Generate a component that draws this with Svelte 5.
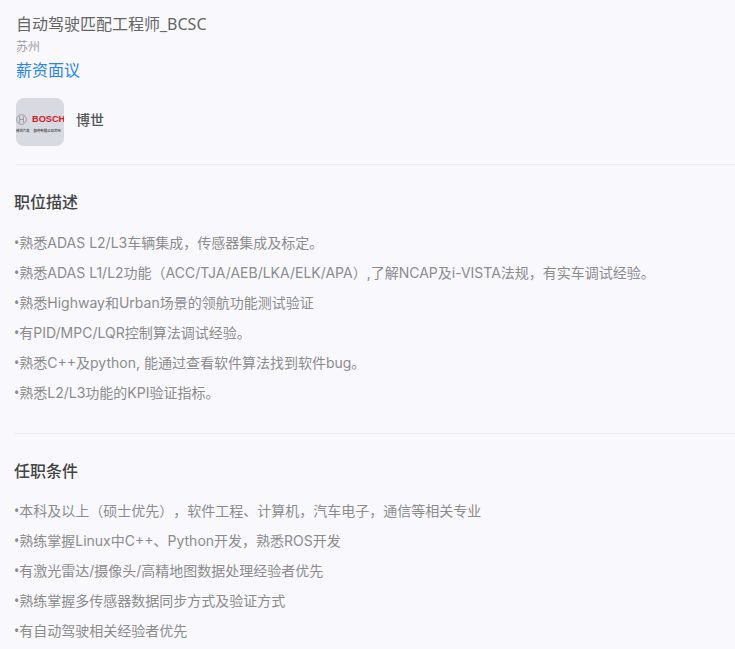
<script>
  const duties = [
    '熟悉ADAS L2/L3车辆集成，传感器集成及标定。',
    '熟悉ADAS L1/L2功能（ACC/TJA/AEB/LKA/ELK/APA）,了解NCAP及i-VISTA法规，有实车调试经验。',
    '熟悉Highway和Urban场景的领航功能测试验证',
    '有PID/MPC/LQR控制算法调试经验。',
    '熟悉C++及python, 能通过查看软件算法找到软件bug。',
    '熟悉L2/L3功能的KPI验证指标。'
  ];

  const requirements = [
    '本科及以上（硕士优先），软件工程、计算机，汽车电子，通信等相关专业',
    '熟练掌握Linux中C++、Python开发，熟悉ROS开发',
    '有激光雷达/摄像头/高精地图数据处理经验者优先',
    '熟练掌握多传感器数据同步方式及验证方式',
    '有自动驾驶相关经验者优先'
  ];
</script>

<main>
  <header class="job">
    <div class="title">自动驾驶匹配工程师_BCSC</div>
    <div class="city">苏州</div>
    <div class="salary">薪资面议</div>
    <div class="company">
      <div class="logo">
        <div class="logo-row">
          <svg width="11" height="11" viewBox="0 0 16 16">
            <circle cx="8" cy="8" r="7" fill="#d9dbdf" stroke="#8d9096" stroke-width="1.2" />
            <path d="M5.2 3.2v9.6M10.8 3.2v9.6M5.2 8h5.6" fill="none" stroke="#8d9096" stroke-width="1.2" />
          </svg>
          <span class="brand">BOSCH</span>
        </div>
        <div class="logo-sub"><span>博世汽车</span><span>部件有限公司苏州</span></div>
      </div>
      <span class="company-name">博世</span>
    </div>
  </header>

  <section>
    <h2>职位描述</h2>
    {#each duties as line}
      <p>{line}</p>
    {/each}
  </section>

  <section>
    <h2>任职条件</h2>
    {#each requirements as line}
      <p>{line}</p>
    {/each}
  </section>
</main>

<style>
  :global(body) {
    background: #f8f8fd;
    overflow: hidden;
  }

  main {
    height: 649px;
    overflow: hidden;
    font-family: Inter, "Noto Sans CJK SC", sans-serif;
    text-spacing-trim: space-all;
  }

  .job {
    margin: 0 0 0 16px;
    padding: 14px 0 18px;
    border-bottom: 1px solid #eeeef3;
  }

  .title {
    font-family: "Noto Sans", "Noto Sans CJK SC", sans-serif;
    font-size: 16px;
    line-height: 20px;
    color: #666;
  }

  .city {
    margin-top: 5px;
    font-size: 12px;
    line-height: 16px;
    color: #a0a0a0;
  }

  .salary {
    margin-top: 4px;
    font-size: 16px;
    line-height: 22px;
    color: #2a86e6;
  }

  .company {
    display: flex;
    gap: 12px;
    margin-top: 17px;
  }

  .logo {
    width: 48px;
    height: 48px;
    padding-top: 15px;
    box-sizing: border-box;
    border-radius: 8px;
    background: #d7dae0;
    overflow: hidden;
  }

  .logo-row {
    display: flex;
    align-items: center;
    gap: 5px;
    height: 12px;
  }

  .logo-row svg {
    flex-shrink: 0;
  }

  .brand {
    font-family: "Liberation Sans", sans-serif;
    font-size: 9.2px;
    font-weight: 700;
    color: #d3152b;
  }

  .logo-sub {
    display: flex;
    gap: 4px;
    margin-top: 3px;
    font-size: 3.4px;
    line-height: 6px;
    font-weight: 700;
    color: #555;
    white-space: nowrap;
  }

  .company-name {
    margin-top: 12px;
    font-size: 14px;
    line-height: 20px;
    font-weight: 500;
    color: #555;
  }

  section {
    margin-left: 14px;
    padding: 26px 0 25px;
    border-bottom: 1px solid #eeeef3;
  }

  section:last-child {
    border-bottom: none;
  }

  h2 {
    margin: 0 0 15px;
    font-size: 16px;
    line-height: 22px;
    font-weight: 500;
    color: #444;
  }

  section + section h2 {
    margin-bottom: 14px;
  }

  p {
    margin: 0;
    font-size: 14px;
    line-height: 30px;
    color: #8c8c8c;
    white-space: nowrap;
  }

  p::before {
    content: '•';
    font-family: "Noto Sans", sans-serif;
  }
</style>
